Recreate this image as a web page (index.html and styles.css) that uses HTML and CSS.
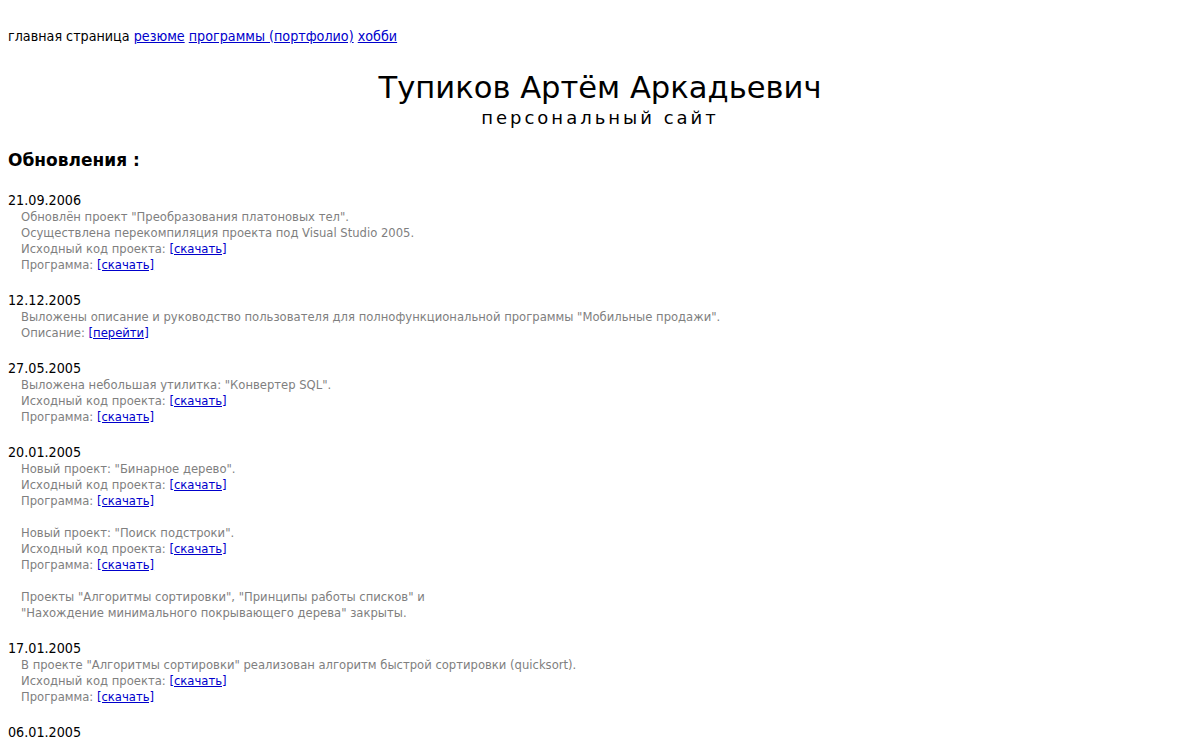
FILE: index.html
```html
<!DOCTYPE html>
<html lang="ru">
<head>
<meta charset="utf-8">
<title>Тупиков Артём Аркадьевич</title>
<link rel="stylesheet" href="styles.css">
</head>
<body>
<div class="nav">главная страница <a href="#">резюме</a> <a href="#">программы (портфолио)</a> <a href="#">хобби</a></div>
<div class="header">
  <div class="title">Тупиков Артём Аркадьевич</div>
  <div class="subtitle">персональный сайт</div>
</div>
<h2 class="updates">Обновления :</h2>

<div class="entry">
  <div class="date">21.09.2006</div>
  <div class="text">
    Обновлён проект "Преобразования платоновых тел".<br>
    Осуществлена перекомпиляция проекта под Visual Studio 2005.<br>
    Исходный код проекта: <a href="#">[скачать]</a><br>
    Программа: <a href="#">[скачать]</a>
  </div>
</div>

<div class="entry">
  <div class="date">12.12.2005</div>
  <div class="text">
    Выложены описание и руководство пользователя для полнофункциональной программы "Мобильные продажи".<br>
    Описание: <a href="#">[перейти]</a>
  </div>
</div>

<div class="entry">
  <div class="date">27.05.2005</div>
  <div class="text">
    Выложена небольшая утилитка: "Конвертер SQL".<br>
    Исходный код проекта: <a href="#">[скачать]</a><br>
    Программа: <a href="#">[скачать]</a>
  </div>
</div>

<div class="entry">
  <div class="date">20.01.2005</div>
  <div class="text">
    Новый проект: "Бинарное дерево".<br>
    Исходный код проекта: <a href="#">[скачать]</a><br>
    Программа: <a href="#">[скачать]</a>
  </div>
  <div class="text">
    Новый проект: "Поиск подстроки".<br>
    Исходный код проекта: <a href="#">[скачать]</a><br>
    Программа: <a href="#">[скачать]</a>
  </div>
  <div class="text">
    Проекты "Алгоритмы сортировки", "Принципы работы списков" и<br>
    "Нахождение минимального покрывающего дерева" закрыты.
  </div>
</div>

<div class="entry">
  <div class="date">17.01.2005</div>
  <div class="text">
    В проекте "Алгоритмы сортировки" реализован алгоритм быстрой сортировки (quicksort).<br>
    Исходный код проекта: <a href="#">[скачать]</a><br>
    Программа: <a href="#">[скачать]</a>
  </div>
</div>

<div class="entry">
  <div class="date">06.01.2005</div>
</div>
</body>
</html>
```
FILE: styles.css
```css
html, body {
  background: #ffffff;
}
body {
  margin: 0;
  padding: 28px 8px 0 8px;
  font-family: "DejaVu Sans Condensed", "DejaVu Sans", sans-serif;
  color: #000;
}
a {
  color: #0000cc;
  text-decoration: underline;
}
.nav {
  font-size: 14.2px;
  line-height: 17px;
}
.header {
  text-align: center;
  margin-top: 25px;
}
.title {
  font-family: "DejaVu Sans", sans-serif;
  font-size: 30.6px;
  line-height: 36px;
}
.subtitle {
  font-family: "DejaVu Sans", sans-serif;
  font-size: 18px;
  line-height: 22px;
  letter-spacing: 3px;
  margin-top: 1px;
}
.updates {
  font-family: "DejaVu Sans", sans-serif;
  font-size: 17px;
  font-weight: bold;
  margin: 21px 0 21px 0;
  line-height: 20px;
}
.entry {
  margin-bottom: 18px;
}
.date {
  font-size: 14.2px;
  line-height: 18px;
}
.text {
  font-size: 12.9px;
  line-height: 16px;
  color: #7f7f7f;
  padding-left: 13px;
}
.text + .text {
  margin-top: 16px;
}
```
